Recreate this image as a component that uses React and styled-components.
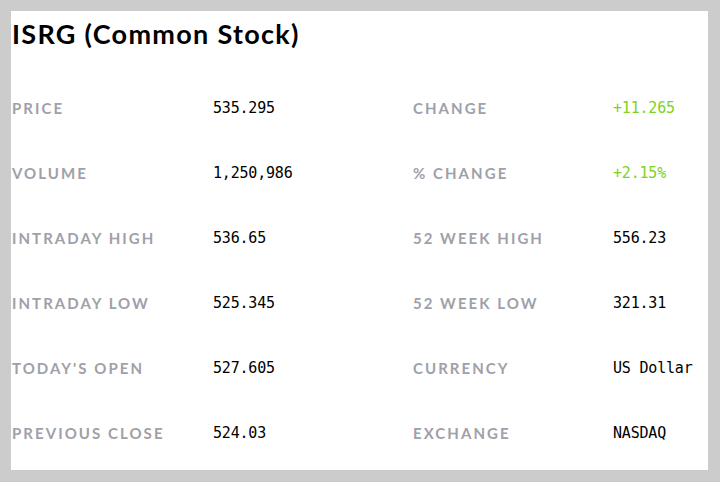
import React from "react";
import styled, { createGlobalStyle } from "styled-components";

const Global = createGlobalStyle`
  html, body { margin: 0; padding: 0; background: #cccccc; }
  body { width: 720px; height: 482px; overflow: hidden; }
`;

const Page = styled.div`
  padding: 11px 12px 12px 11px;
`;

const Panel = styled.div`
  background: #ffffff;
  width: 697px;
  height: 459px;
  box-sizing: border-box;
  padding-left: 1px;
`;

const Title = styled.h1`
  margin: 0 0 20px 0;
  height: 44px;
  line-height: 45px;
  font-family: "Lato", "Open Sans", sans-serif;
  font-weight: 700;
  font-size: 27px;
  color: #000;
  letter-spacing: 1.3px;
`;

const Grid = styled.div`
  display: grid;
  grid-template-columns: 201px 200px 200px 1fr;
  grid-auto-rows: 65px;
  align-items: center;
`;

const Label = styled.div`
  font-family: "Lato", "Open Sans", sans-serif;
  font-weight: 700;
  font-size: 15px;
  letter-spacing: 2.05px;
  text-transform: uppercase;
  color: #a0a0a8;
  white-space: nowrap;
`;

const Value = styled.div`
  font-family: "DejaVu Sans Mono", "Liberation Mono", monospace;
  font-size: 15px;
  letter-spacing: -0.2px;
  color: ${(p) => (p.$up ? "#7ed321" : "#000")};
  white-space: nowrap;
`;

const rows = [
  ["Price", "535.295", "Change", "+11.265", true],
  ["Volume", "1,250,986", "% Change", "+2.15%", true],
  ["Intraday High", "536.65", "52 Week High", "556.23"],
  ["Intraday Low", "525.345", "52 Week Low", "321.31"],
  ["Today's Open", "527.605", "Currency", "US Dollar"],
  ["Previous Close", "524.03", "Exchange", "NASDAQ"],
];

export default function App() {
  return (
    <>
      <Global />
      <Page>
        <Panel>
          <Title>ISRG (Common Stock)</Title>
          <Grid>
            {rows.map(([l1, v1, l2, v2, up]) => (
              <React.Fragment key={l1}>
                <Label>{l1}</Label>
                <Value>{v1}</Value>
                <Label>{l2}</Label>
                <Value $up={up}>{v2}</Value>
              </React.Fragment>
            ))}
          </Grid>
        </Panel>
      </Page>
    </>
  );
}
